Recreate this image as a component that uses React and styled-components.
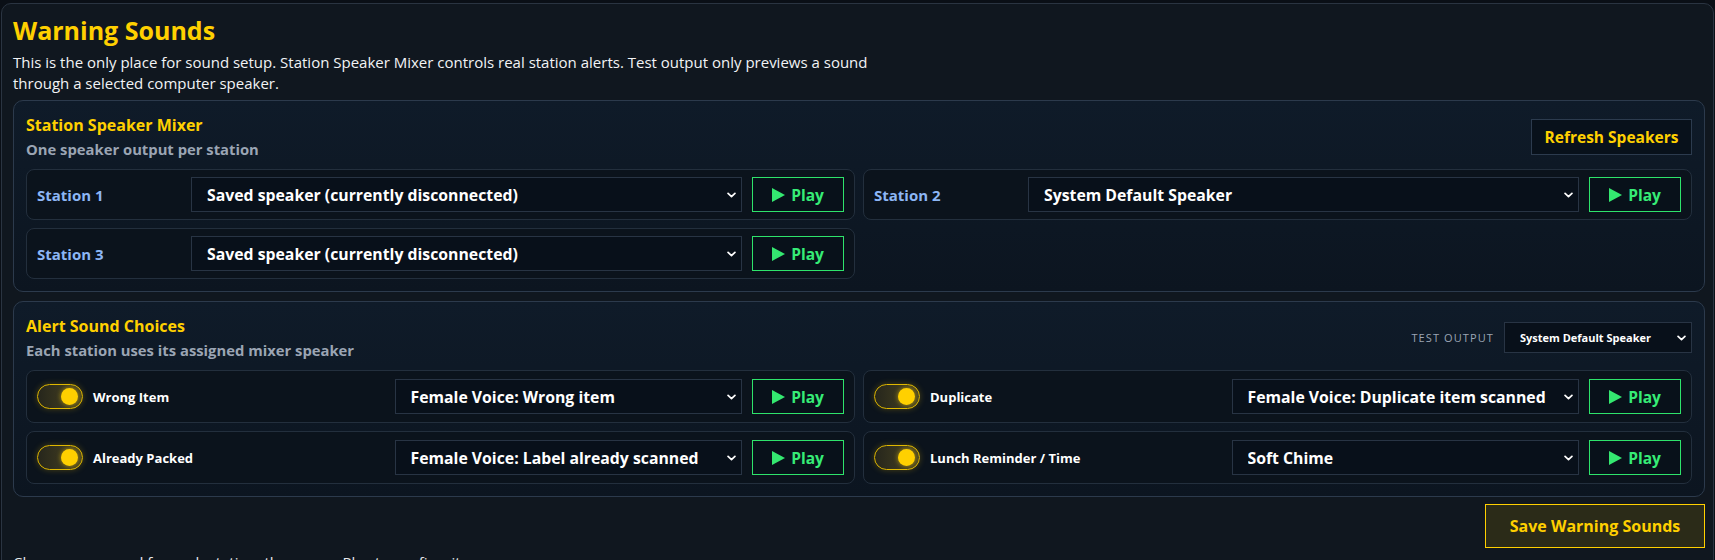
import styled, { createGlobalStyle } from 'styled-components'

const GlobalStyle = createGlobalStyle`
	* { box-sizing: border-box; }
	html, body {
		margin: 0;
		padding: 0;
		background: #0a0f16;
		font-family: "Open Sans", "Noto Sans", sans-serif;
		color: #e8eaed;
		overflow: hidden;
	}
`

const stations = [
	{ id: 1, name: 'Station 1', speaker: 'Saved speaker (currently disconnected)' },
	{ id: 2, name: 'Station 2', speaker: 'System Default Speaker' },
	{ id: 3, name: 'Station 3', speaker: 'Saved speaker (currently disconnected)' },
]

const alerts = [
	{ id: 'wrong', label: 'Wrong Item', sound: 'Female Voice: Wrong item' },
	{ id: 'dup', label: 'Duplicate', sound: 'Female Voice: Duplicate item scanned' },
	{ id: 'packed', label: 'Already Packed', sound: 'Female Voice: Label already scanned' },
	{ id: 'lunch', label: 'Lunch Reminder / Time', sound: 'Soft Chime' },
]

const Chevron = () => (
	<ChevronIcon viewBox="0 0 10 6" width="9" height="6">
		<path d="M1.2 1.2l3.8 3.6 3.8-3.6" fill="none" stroke="#fff" strokeWidth="1.9" strokeLinecap="round" strokeLinejoin="round" />
	</ChevronIcon>
)

const SoundSelect = ({ value, small }) => (
	<SelectWrap>
		<Select defaultValue={value} small={small}>
			<option>{value}</option>
		</Select>
		<Chevron />
	</SelectWrap>
)

const PlayButton = () => (
	<Play>
		<svg viewBox="0 0 13 14" width="13" height="14">
			<polygon points="0,0 13,7 0,14" fill="#34e870" />
		</svg>
		Play
	</Play>
)

export default function App() {
	return (
		<>
			<GlobalStyle />
			<Page>
				<Title>Warning Sounds</Title>
				<Intro>
					This is the only place for sound setup. Station Speaker Mixer controls real station alerts. Test output only previews a sound
					<br />
					through a selected computer speaker.
				</Intro>

				<Section>
					<SectionHeader>
						<div>
							<SectionTitle>Station Speaker Mixer</SectionTitle>
							<SectionHint>One speaker output per station</SectionHint>
						</div>
						<RefreshButton>Refresh Speakers</RefreshButton>
					</SectionHeader>
					<CardGrid>
						{stations.map(station => (
							<StationCard key={station.id}>
								<StationName>{station.name}</StationName>
								<SoundSelect value={station.speaker} />
								<PlayButton />
							</StationCard>
						))}
					</CardGrid>
				</Section>

				<Section>
					<SectionHeader>
						<div>
							<SectionTitle>Alert Sound Choices</SectionTitle>
							<SectionHint>Each station uses its assigned mixer speaker</SectionHint>
						</div>
						<TestOutput>
							<TestLabel>Test Output</TestLabel>
							<TestSelectBox>
								<SoundSelect value="System Default Speaker" small />
							</TestSelectBox>
						</TestOutput>
					</SectionHeader>
					<CardGrid>
						{alerts.map(alert => (
							<AlertCard key={alert.id}>
								<AlertName>
									<Toggle>
										<Knob />
									</Toggle>
									{alert.label}
								</AlertName>
								<SoundSelect value={alert.sound} />
								<PlayButton />
							</AlertCard>
						))}
					</CardGrid>
				</Section>

				<Footer>
					<SaveButton>Save Warning Sounds</SaveButton>
				</Footer>
				<Note>Choose one sound for each station, then press Play to confirm it.</Note>
			</Page>
		</>
	)
}

const Page = styled.div`
	margin: 3px 1px 0 1px;
	padding: 13px 8px 20px 11px;
	min-height: 600px;
	background: #10171f;
	border: 1px solid #2a3441;
	border-radius: 10px;
`

const Title = styled.h1`
	margin: 0 0 9px;
	font-size: 25px;
	line-height: 26px;
	font-weight: 700;
	color: #ffd000;
`

const Intro = styled.p`
	margin: 0 0 6px;
	font-size: 15px;
	line-height: 21px;
	color: #f2f3f5;
`

const Section = styled.section`
	margin-bottom: 9px;
	padding: 14px 12px 12px;
	background: linear-gradient(180deg, #0f1b29 0%, #0c1520 100%);
	border: 1px solid #2c3a4c;
	border-radius: 10px;
`

const SectionHeader = styled.div`
	display: flex;
	align-items: center;
	justify-content: space-between;
	margin-bottom: 11px;
`

const SectionTitle = styled.h2`
	margin: 0;
	font-size: 16px;
	line-height: 20px;
	font-weight: 700;
	color: #ffd000;
`

const SectionHint = styled.div`
	margin-top: 5px;
	font-size: 14.8px;
	line-height: 18px;
	font-weight: 700;
	color: #9ba5b4;
`

const RefreshButton = styled.button`
	width: 161px;
	height: 36px;
	padding: 0;
	background: #08111b;
	border: 1px solid #2c3b4e;
	color: #ffd000;
	font-family: inherit;
	font-size: 15.5px;
	font-weight: 700;
`

const CardGrid = styled.div`
	display: grid;
	grid-template-columns: 1fr 1fr;
	gap: 8px;
`

const Card = styled.div`
	display: grid;
	align-items: center;
	column-gap: 10px;
	background: #0b131c;
	border: 1px solid #232f3d;
	border-radius: 8px;
`

const StationCard = styled(Card)`
	grid-template-columns: 144px 1fr 92px;
	padding: 7px 10px;
`

const AlertCard = styled(Card)`
	grid-template-columns: 1fr 1fr 92px;
	padding: 8px 10px;
`

const StationName = styled.div`
	font-size: 15px;
	font-weight: 700;
	color: #8db6f5;
`

const AlertName = styled.div`
	display: flex;
	align-items: center;
	gap: 10px;
	font-size: 13px;
	font-weight: 700;
	color: #ffffff;
`

const Toggle = styled.span`
	position: relative;
	flex: none;
	width: 46px;
	height: 25px;
	border: 1px solid #e0b800;
	border-radius: 13px;
	background: linear-gradient(90deg, #26261c 0%, #4a4522 100%);
	box-shadow: 0 0 6px rgba(255, 208, 0, 0.25);
`

const Knob = styled.span`
	position: absolute;
	top: 3px;
	right: 4px;
	width: 17px;
	height: 17px;
	border-radius: 50%;
	background: #ffd000;
	box-shadow: 0 0 5px rgba(255, 208, 0, 0.6);
`

const SelectWrap = styled.div`
	position: relative;
	width: 100%;
`

const Select = styled.select`
	display: block;
	width: 100%;
	height: ${({ small }) => (small ? '31px' : '35px')};
	padding: ${({ small }) => (small ? '0 22px 0 15px' : '0 24px 0 15px')};
	appearance: none;
	background: #08101a;
	border: 1px solid #283444;
	border-radius: 0;
	color: #ffffff;
	font-family: inherit;
	font-size: ${({ small }) => (small ? '11px' : '15.8px')};
	font-weight: 700;
	outline: none;
`

const ChevronIcon = styled.svg`
	position: absolute;
	top: 50%;
	right: 6px;
	margin-top: -3px;
	pointer-events: none;
`

const Play = styled.button`
	display: flex;
	align-items: center;
	justify-content: center;
	gap: 6px;
	height: 35px;
	background: #08111a;
	border: 1px solid #2ee36b;
	color: #36ec76;
	font-family: inherit;
	font-size: 15.5px;
	font-weight: 700;
`

const TestOutput = styled.div`
	display: flex;
	align-items: center;
	gap: 10px;
`

const TestLabel = styled.span`
	font-size: 11px;
	letter-spacing: 1.1px;
	text-transform: uppercase;
	color: #9ba5b4;
`

const TestSelectBox = styled.div`
	width: 188px;
`

const Footer = styled.div`
	display: flex;
	justify-content: flex-end;
	margin-top: -2px;
`

const SaveButton = styled.button`
	width: 220px;
	height: 44px;
	background: #2b2b18;
	border: 1px solid #ffd000;
	color: #ffd000;
	font-family: inherit;
	font-size: 16px;
	font-weight: 700;
`

const Note = styled.p`
	margin: 4px 0 0;
	font-size: 15px;
	line-height: 21px;
	color: #e8eaed;
`
